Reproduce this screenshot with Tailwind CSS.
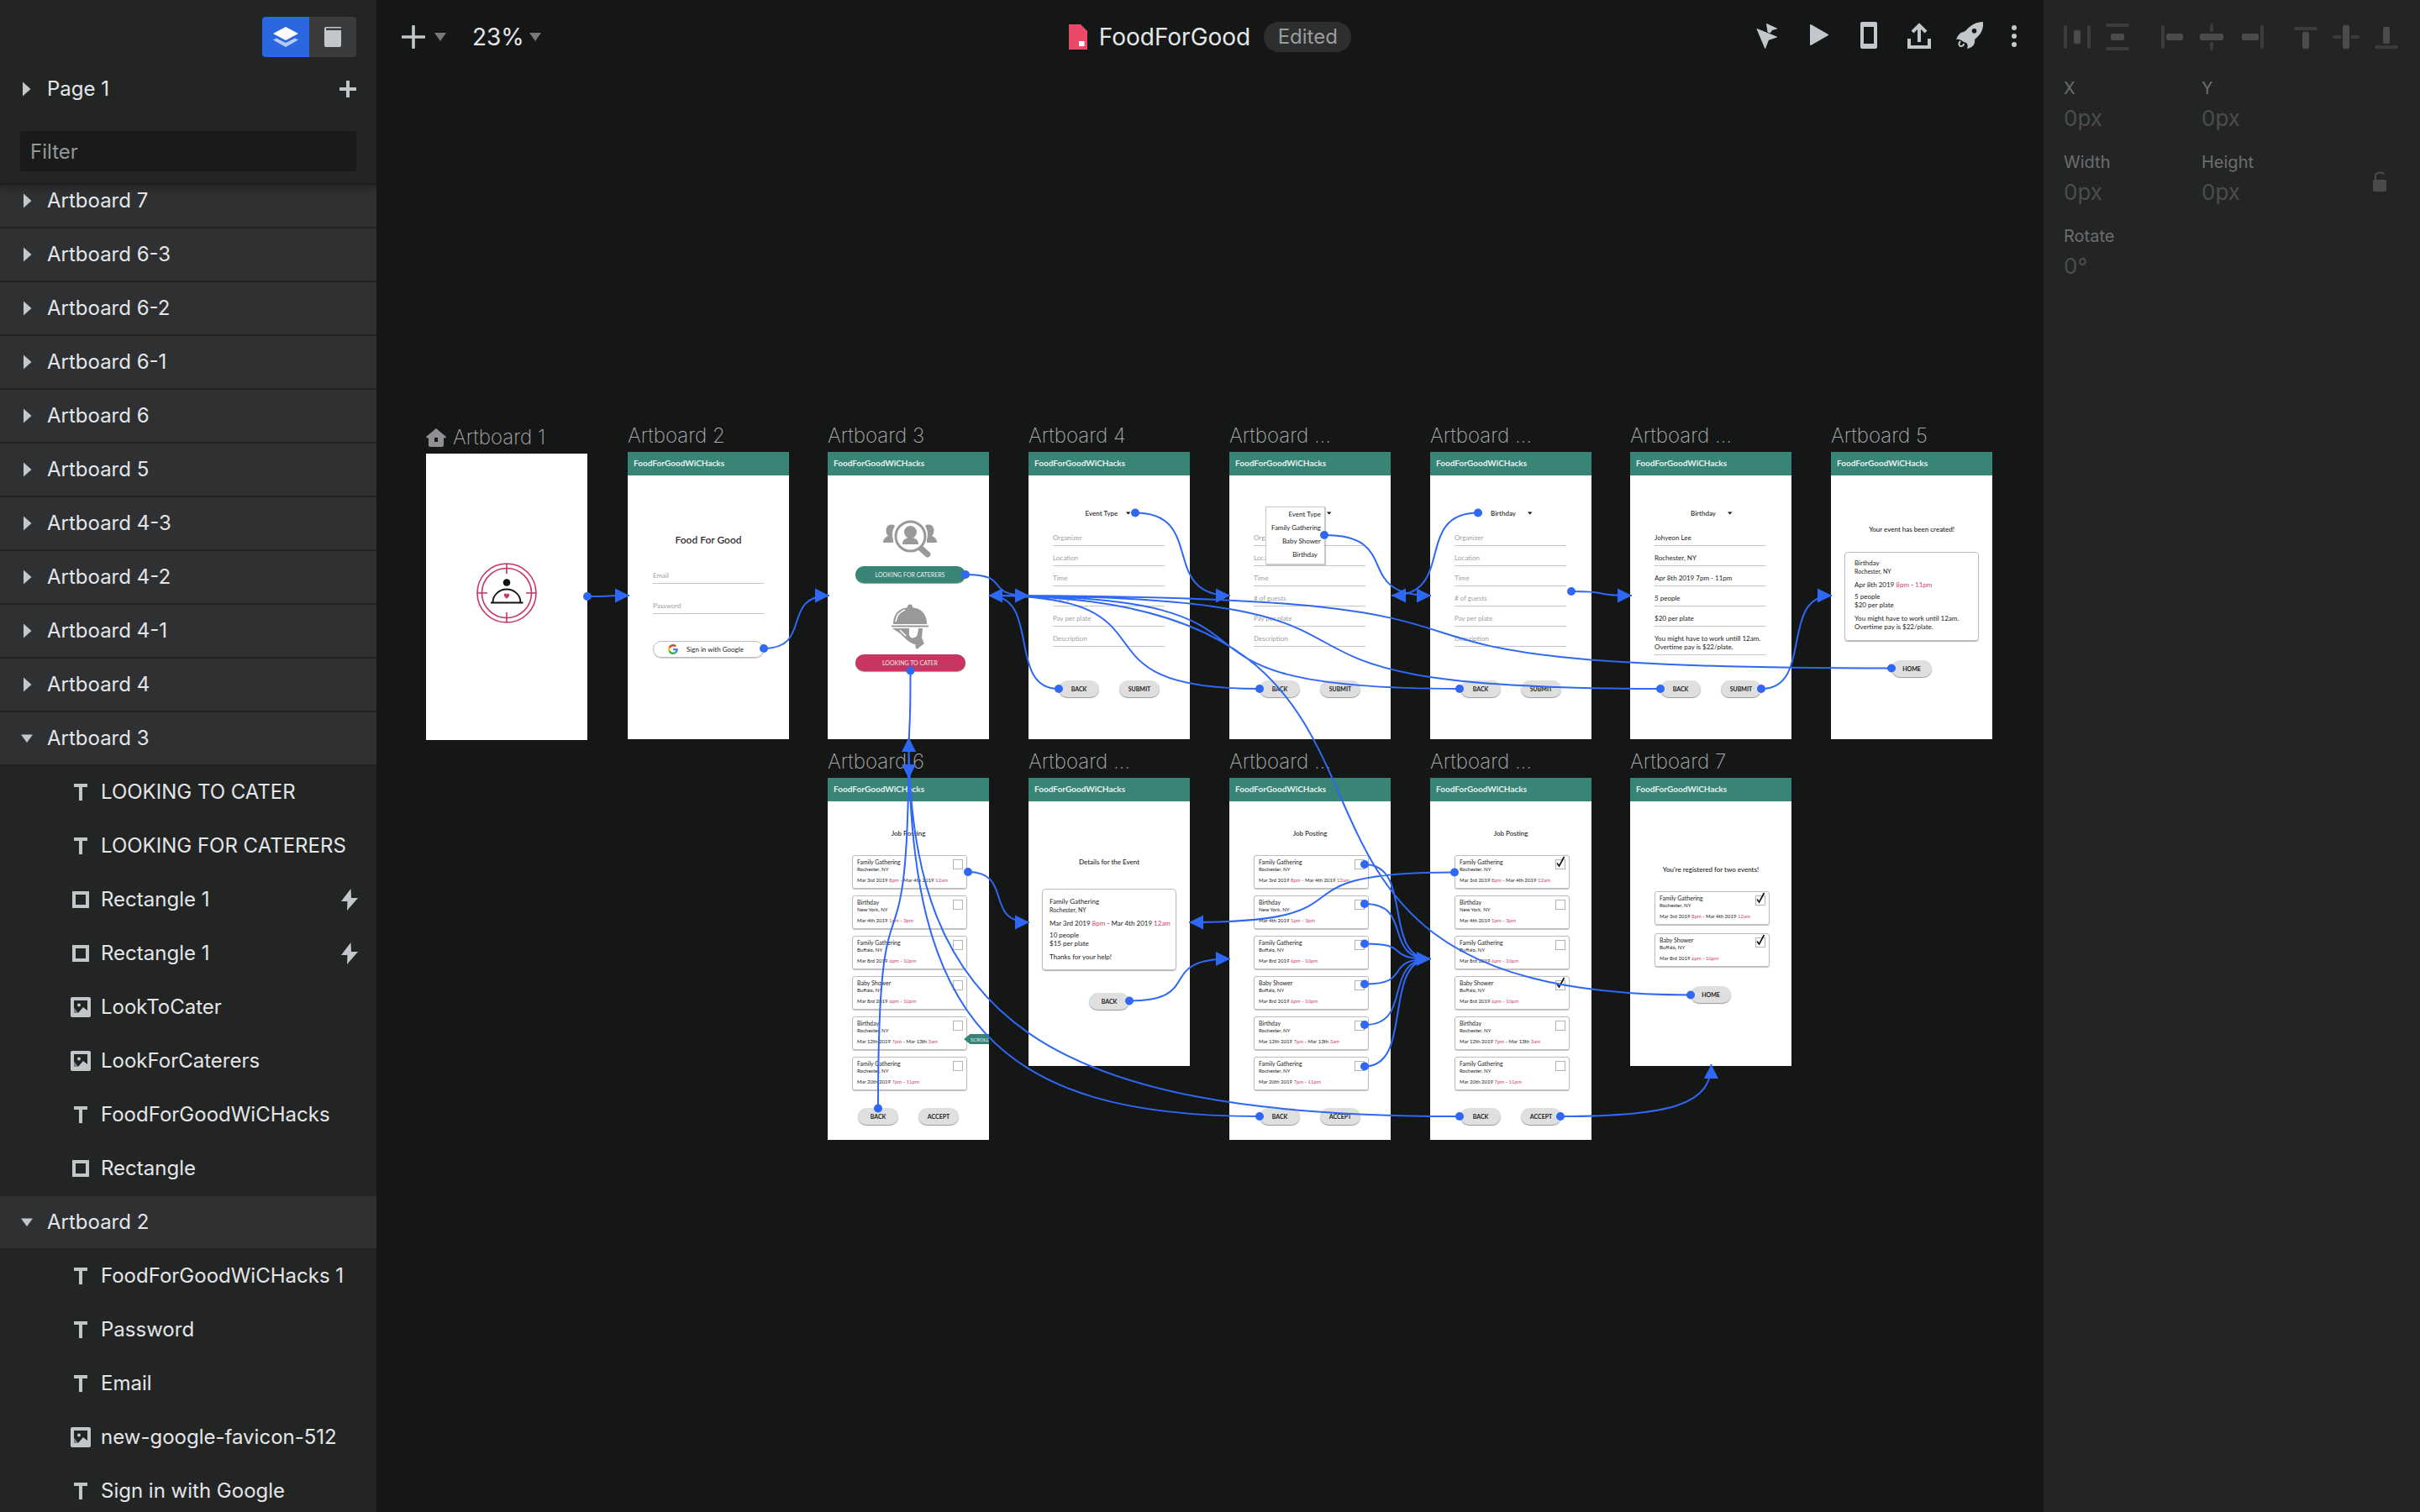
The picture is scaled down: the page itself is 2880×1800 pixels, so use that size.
<!DOCTYPE html>
<html lang="en">
<head>
<meta charset="utf-8">
<title>FoodForGood</title>
<script src="https://cdn.jsdelivr.net/npm/@tailwindcss/browser@4"></script>
</head>
<body class="flex h-screen overflow-hidden bg-[#151716] font-['Inter',sans-serif] text-[#e4e6e9]">

<svg class="hidden">
  <symbol id="i-right" viewBox="0 0 12 20"><path d="M1 1.5 10.500 10 1 18.500z" fill="#c3c6ca"/></symbol>
  <symbol id="i-down" viewBox="0 0 16 12"><path d="M1 1.500h14L8 11z" fill="#c3c6ca"/></symbol>
  <symbol id="i-text" viewBox="0 0 24 24"><path d="M4 2h16v4h-6v16h-4V6H4z" fill="#c3c6ca"/></symbol>
  <symbol id="i-rect" viewBox="0 0 24 24"><path d="M4 4h16v16H4z" fill="none" stroke="#c3c6ca" stroke-width="4"/></symbol>
  <symbol id="i-image" viewBox="0 0 24 24"><rect width="24" height="24" rx="2" fill="#c3c6ca"/><path d="M4 4h16v12l-5-4-6 7-5-6z" fill="#232524"/><path d="M4 13l5 6H4z" fill="#7c7f81"/><circle cx="10" cy="9.500" r="2" fill="#c3c6ca"/></symbol>
  <symbol id="i-bolt" viewBox="0 0 20 26"><path d="M11.500 0 0 15h7.500L7 26 20 11h-8z" fill="#c3c6ca"/></symbol>
  <symbol id="i-caret" viewBox="0 0 14 10"><path d="M0 0h14L7 10z" fill="#77797b"/></symbol>
  <symbol id="i-pick" viewBox="0 0 6 4"><path d="M0 .5h5.500L2.750 3.500z" fill="#111"/></symbol>
  <symbol id="i-google" viewBox="0 0 48 48">
    <path fill="#EA4335" d="M24 9.500c3.540 0 6.710 1.220 9.210 3.600l6.850-6.850C35.900 2.380 30.470 0 24 0 14.620 0 6.510 5.380 2.560 13.220l7.980 6.190C12.430 13.720 17.740 9.500 24 9.500z"/>
    <path fill="#4285F4" d="M46.980 24.550c0-1.570-.15-3.090-.38-4.550H24v9.020h12.940c-.58 2.960-2.260 5.480-4.780 7.180l7.730 6c4.510-4.180 7.090-10.360 7.090-17.650z"/>
    <path fill="#FBBC05" d="M10.530 28.590c-.48-1.450-.76-2.990-.76-4.590s.27-3.140.76-4.590l-7.980-6.190C.92 16.460 0 20.120 0 24c0 3.880.92 7.540 2.560 10.780l7.970-6.190z"/>
    <path fill="#34A853" d="M24 48c6.480 0 11.930-2.130 15.890-5.810l-7.730-6c-2.150 1.450-4.920 2.300-8.160 2.300-6.260 0-11.570-4.220-13.470-9.910l-7.980 6.190C6.510 42.620 14.620 48 24 48z"/>
  </symbol>
  <symbol id="i-logo" viewBox="0 0 72 72">
    <g fill="none" stroke="#c83560" stroke-width="1.600"><circle cx="36" cy="36" r="35"/><circle cx="36" cy="36" r="29.500"/><path d="M36 1v12M36 59v12M1 36h12M59 36h12"/></g>
    <circle cx="36" cy="23.500" r="4.300" fill="#111"/>
    <path d="M19.500 47a16.500 15.500 0 0 1 33 0M17 47.500h38.500" fill="none" stroke="#111" stroke-width="1.800"/>
    <path d="M36 43l-3-3.500c-.8-3 2-4 3-1.500 1-2.500 3.800-1.500 3 1.500z" fill="#c83560"/>
  </symbol>
  <symbol id="i-people" viewBox="0 0 66 46">
    <g fill="#999">
      <path d="M8 6c3-1 6-.5 7 1-3 5-4 11-2 16v4H1c0-4 2-6 6-8-4-4-3-11 1-13z"/>
      <path d="M58 6c-3-1-6-.5-7 1 3 5 4 11 2 16v4h12c0-4-2-6-6-8 4-4 3-11-1-13z"/>
      <circle cx="33.500" cy="14.500" r="7.500"/><path d="M24 29c0-5 3-7 7-8h5c4 1 7 3 7 8z"/>
      <path d="M42 35l5-5 10 9c2 3-2 7-5 5z"/>
    </g>
    <circle cx="33.500" cy="19.500" r="17.500" fill="none" stroke="#999" stroke-width="3"/>
  </symbol>
  <symbol id="i-cloche" viewBox="0 0 44 54">
    <g fill="#999">
      <circle cx="22" cy="3.500" r="3"/><path d="M2 24C2 10 11 4 22 4s20 6 20 20z"/>
      <path d="M0 25.500h44v2H0z"/><path d="M1 29h20v5c-1 7 6 9 9 3l2-8h5l-1 12 2 3-8 5C19 46 16 40 10 35z"/>
      <path d="M28 50l8-7 3 4-9 7z"/>
    </g>
    <path d="M5 21C6 13 10 9 16 7M10 31l7 7" stroke="#fff" stroke-width="1.500" fill="none"/>
    <path d="M23 28.500h9l-1 7c-1 6-8 6-8 0z" fill="#fff"/>
  </symbol>
  <symbol id="i-check" viewBox="0 0 12 14"><path d="M2 8.500 4.500 12 10.500 1" fill="none" stroke="#111" stroke-width="1.600"/></symbol>
</svg>

<!-- Layers -->
<aside class="flex w-[448px] shrink-0 flex-col overflow-hidden bg-[#232524]">
  <header class="relative z-10 border-b-2 border-[#1c1e1e] bg-[#232524] px-6 pt-5 pb-3.5 shadow-[0_4px_8px_rgba(0,0,0,0.25)]">
    <div class="flex justify-end">
      <div class="flex h-12 w-28 overflow-hidden rounded">
        <button aria-label="Layers" class="flex flex-1 items-center justify-center bg-[#2c67e2]">
          <svg class="h-6 w-[30px]" viewBox="0 0 30 24"><path d="M15 0l15 8-15 8L0 8z" fill="#fff"/><path d="M0 15.500l4-2L15 19l11-5.500 4 2L15 24z" fill="#fff" fill-opacity=".65"/></svg>
        </button>
        <button aria-label="Pages" class="flex flex-1 items-center justify-center bg-[#3a3b3d]">
          <svg class="h-6 w-5" viewBox="0 0 20 24"><path d="M2 0h18v1.500H2V4h18v18a2 2 0 0 1-2 2H2a2 2 0 0 1-2-2V2a2 2 0 0 1 2-2z" fill="#c3c6cb"/></svg>
        </button>
      </div>
    </div>
    <div class="mt-3.5 flex h-12 items-center">
      <button class="flex flex-1 items-center gap-[18px] pl-[2px] text-left text-2xl"><svg class="h-5 w-3"><use href="#i-right"/></svg>Page 1</button>
      <button aria-label="Add page"><svg class="h-5 w-5" viewBox="0 0 20 20"><path d="M10 1v18M1 10h18" stroke="#c3c6ca" stroke-width="4" stroke-linecap="round"/></svg></button>
    </div>
    <input aria-label="Filter" placeholder="Filter" class="mt-[26px] block h-12 w-full rounded bg-[#191b1a] px-3 text-2xl placeholder:text-[#95979a]">
  </header>
  <ul id="layers" class="-mt-3 shrink-0 text-2xl"></ul>
</aside>

<!-- Canvas -->
<main class="relative min-w-0 flex-1 overflow-hidden">
  <div class="relative z-10 grid h-[88px] grid-cols-[1fr_auto_1fr] items-center text-[28px]">
    <div class="flex items-center pl-[30px]">
      <button aria-label="Insert" class="flex items-center gap-[11px]">
        <svg class="h-7 w-7" viewBox="0 0 28 28"><path d="M14 1.500v25M1.500 14h25" stroke="#c3c6cb" stroke-width="3.600" stroke-linecap="round"/></svg>
        <svg class="h-2.5 w-3.5"><use href="#i-caret"/></svg>
      </button>
      <button class="ml-[31px] flex items-center gap-1.5">23%<svg class="h-2.5 w-3.5"><use href="#i-caret"/></svg></button>
    </div>
    <div class="flex items-center">
      <svg class="h-[30px] w-[22px]" viewBox="0 0 22 30"><path d="M0 0h14l8 8v22H0z" fill="#ec4868"/><path d="M12 20h6.500v6H12z" fill="#fff"/></svg>
      <h1 class="ml-3.5">FoodForGood</h1>
      <span class="ml-4 flex h-9 w-[104px] items-center justify-center rounded-full bg-[#2d2f2f] text-2xl text-[#9a9c9e]">Edited</span>
    </div>
    <div class="flex items-center justify-end gap-5 pr-[22px] pb-1">
      <button aria-label="Hotspots" class="flex w-10 justify-center"><svg class="h-8 w-8" viewBox="0 0 32 32" fill="#c3c6cb" stroke="#c3c6cb" stroke-linejoin="round"><path d="M3 8.500 26.500 18l-10 3.500-3.800 10z"/><path d="M14.500 2.500 26.500 8l-5.500 1.500L18.500 13l-2.500-1z"/></svg></button>
      <button aria-label="Play" class="flex w-10 justify-center"><svg class="h-8 w-8" viewBox="0 0 32 32" fill="#c3c6cb" stroke="#c3c6cb" stroke-width="2" stroke-linejoin="round"><path d="M7 4v23l20-11.500z"/></svg></button>
      <button aria-label="Device preview" class="flex w-10 justify-center"><svg class="h-8 w-8" viewBox="0 0 32 32"><path fill-rule="evenodd" d="M8 0h16a2 2 0 0 1 2 2v28a2 2 0 0 1-2 2H8a2 2 0 0 1-2-2V2a2 2 0 0 1 2-2zm2 6v20h12V6z" fill="#c3c6cb"/></svg></button>
      <button aria-label="Share" class="flex w-10 justify-center"><svg class="h-8 w-8" viewBox="0 0 32 32" fill="none" stroke="#c3c6cb" stroke-width="4"><path d="M4 20v10h24V20"/><path d="M16 24V5M8 12l8-8 8 8"/></svg></button>
      <button aria-label="Publish" class="flex w-10 justify-center"><svg class="h-8 w-8" viewBox="0 0 32 32"><path fill-rule="evenodd" d="M32 0C33 10 28 16 22 21c1 6-3 10-9 11 1-3 1-5-1-7l-3-1c-3-2-5-4-9-3 2-5 5-9 9-9l3-2C17 4 24 0 32 0zM21.500 8a2.800 2.800 0 1 0 0 5.600 2.800 2.800 0 0 0 0-5.600z" fill="#c3c6cb"/><path d="M5 23c-3 3-1 6 0 6s4 0 4-3" fill="none" stroke="#c3c6cb" stroke-width="2"/></svg></button>
      <button aria-label="More" class="flex w-[26px] justify-center"><svg class="h-8 w-2" viewBox="0 0 8 32" fill="#c3c6cb"><circle cx="4" cy="7" r="3"/><circle cx="4" cy="17" r="3"/><circle cx="4" cy="27" r="3"/></svg></button>
    </div>
  </div>
  <div id="boards" class="absolute inset-0 font-['Lato',sans-serif] text-[#222]"></div>
  <svg id="links" class="pointer-events-none absolute inset-0 h-full w-full" fill="#2e68f4" stroke-width="2"></svg>
</main>

<!-- Inspector -->
<aside class="w-[448px] shrink-0 bg-[#232524] px-6 pt-7">
  <div class="flex gap-8">
    <div class="flex gap-4">
      <button aria-label="Distribute horizontally" disabled><svg class="h-8 w-8" viewBox="0 0 32 32"><rect y="2" width="4" height="28" rx="2" fill="#3a3c3c"/><rect x="28" y="2" width="4" height="28" rx="2" fill="#3a3c3c"/><rect x="12" y="8" width="8" height="16" rx="2" fill="#4a4b4d"/></svg></button>
      <button aria-label="Distribute vertically" disabled><svg class="h-8 w-8" viewBox="0 0 32 32"><rect x="2" width="28" height="4" rx="2" fill="#3a3c3c"/><rect x="2" y="28" width="28" height="4" rx="2" fill="#3a3c3c"/><rect x="8" y="12" width="16" height="8" rx="2" fill="#4a4b4d"/></svg></button>
    </div>
    <div class="flex gap-4">
      <button aria-label="Align left" disabled><svg class="h-8 w-8" viewBox="0 0 32 32"><rect x="4" y="2" width="4" height="28" rx="2" fill="#3a3c3c"/><rect x="10" y="12" width="20" height="8" rx="2" fill="#4a4b4d"/></svg></button>
      <button aria-label="Align centre" disabled><svg class="h-8 w-8" viewBox="0 0 32 32"><path d="M14 2a2 2 0 0 1 4 0v8h-4zM14 22h4v8a2 2 0 0 1-4 0z" fill="#3a3c3c"/><rect x="2" y="12" width="28" height="8" rx="2" fill="#4a4b4d"/></svg></button>
      <button aria-label="Align right" disabled><svg class="h-8 w-8" viewBox="0 0 32 32"><rect x="26" y="2" width="4" height="28" rx="2" fill="#3a3c3c"/><rect x="4" y="12" width="20" height="8" rx="2" fill="#4a4b4d"/></svg></button>
    </div>
    <div class="flex gap-4">
      <button aria-label="Align top" disabled><svg class="h-8 w-8" viewBox="0 0 32 32"><rect x="2" y="4" width="28" height="4" rx="2" fill="#3a3c3c"/><rect x="12" y="10" width="8" height="20" rx="2" fill="#4a4b4d"/></svg></button>
      <button aria-label="Align middle" disabled><svg class="h-8 w-8" viewBox="0 0 32 32"><path d="M2 14a2 2 0 0 0 0 4h8v-4zM22 14v4h8a2 2 0 0 0 0-4z" fill="#3a3c3c"/><rect x="12" y="2" width="8" height="28" rx="2" fill="#4a4b4d"/></svg></button>
      <button aria-label="Align bottom" disabled><svg class="h-8 w-8" viewBox="0 0 32 32"><rect x="2" y="26" width="28" height="4" rx="2" fill="#3a3c3c"/><rect x="12" y="4" width="8" height="20" rx="2" fill="#4a4b4d"/></svg></button>
    </div>
  </div>
  <div class="mt-[33px] flex">
    <div class="grid grid-cols-[164px_164px] gap-y-[22px] text-[26px] text-[#4b4d4e]">
      <div class="h-[66px]"><label for="x" class="block h-6 text-xl leading-6 text-[#6c6e70]">X</label><input id="x" value="0px" disabled class="mt-[5px] block h-9 w-36"></div>
      <div class="h-[66px]"><label for="y" class="block h-6 text-xl leading-6 text-[#6c6e70]">Y</label><input id="y" value="0px" disabled class="mt-[5px] block h-9 w-36"></div>
      <div class="h-[66px]"><label for="w" class="block h-6 text-xl leading-6 text-[#6c6e70]">Width</label><input id="w" value="0px" disabled class="mt-[5px] block h-9 w-36"></div>
      <div class="h-[66px]"><label for="h" class="block h-6 text-xl leading-6 text-[#6c6e70]">Height</label><input id="h" value="0px" disabled class="mt-[5px] block h-9 w-36"></div>
      <div class="h-[66px]"><label for="r" class="block h-6 text-xl leading-6 text-[#6c6e70]">Rotate</label><input id="r" value="0°" disabled class="mt-[5px] block h-9 w-36"></div>
    </div>
    <button aria-label="Lock ratio" disabled class="mt-[111px] ml-10 h-6 w-4"><svg class="h-6 w-4" viewBox="0 0 16 24"><rect y="10" width="16" height="14" rx="2" fill="#4a4b4d"/><path d="M3 11V6c0-5 8-6 10-2.500" fill="none" stroke="#4a4b4d" stroke-width="2"/></svg></button>
  </div>
</aside>

<script>
  // Layer list
  const closed = ['7', '6-3', '6-2', '6-1', '6', '5', '4-3', '4-2', '4-1', '4'];
  const boardRow = (name, icon, size) =>
    `<li class="h-16 border-b-2 border-[#232524] bg-[#2f3032]"><button class="flex h-full w-full items-center pb-px pl-6 text-left"><span class="flex w-8 justify-start"><svg class="${size}"><use href="#${icon}"/></svg></span>Artboard ${name}</button></li>`;
  const layerRow = ([icon, name, bolt]) =>
    `<li class="h-16"><button class="flex h-[62px] w-full items-center gap-3 pr-[22px] pb-px pl-[84px] text-left"><svg class="h-6 w-6"><use href="#i-${icon}"/></svg><span class="flex-1">${name}</span>${bolt ? '<svg class="h-[26px] w-5"><use href="#i-bolt"/></svg>' : ''}</button></li>`;
  const open3 = [['text', 'LOOKING TO CATER'], ['text', 'LOOKING FOR CATERERS'], ['rect', 'Rectangle 1', 1], ['rect', 'Rectangle 1', 1], ['image', 'LookToCater'], ['image', 'LookForCaterers'], ['text', 'FoodForGoodWiCHacks'], ['rect', 'Rectangle']];
  const open2 = [['text', 'FoodForGoodWiCHacks 1'], ['text', 'Password'], ['text', 'Email'], ['image', 'new-google-favicon-512'], ['text', 'Sign in with Google']];
  document.getElementById('layers').innerHTML =
    closed.map(n => boardRow(n, 'i-right', 'ml-[3px] h-5 w-3')).join('') +
    boardRow('3', 'i-down', 'h-3 w-4') + open3.map(layerRow).join('') +
    boardRow('2', 'i-down', 'h-3 w-4') + open2.map(layerRow).join('');

  // Artboards
  const pill = t => `<button class="h-5 w-12 rounded-full bg-[#dfdfdf] text-[7px] font-bold shadow-[0_1px_1px_rgba(0,0,0,0.4)]">${t}</button>`;
  const pair = (a, b) => `<div class="mt-auto mb-[50px] flex justify-center gap-6">${pill(a)}${pill(b)}</div>`;
  const red = t => `<span class="text-[#d0416f]">${t}</span>`;
  const titled = (name, x, y, h, body, home) => `
    <section class="absolute w-48" style="left:${x}px;top:${y}px">
      <h2 class="flex h-[38px] items-center gap-2 pb-px font-['Inter',sans-serif] text-2xl font-extralight whitespace-nowrap text-[#aaacaf]">${home ? '<svg class="h-[22px] w-6" viewBox="0 0 24 22"><path fill-rule="evenodd" d="M12 0l12 10-1 1.500h-2V20a2 2 0 0 1-2 2H5a2 2 0 0 1-2-2v-8.500H1L0 10zM10 11v5h4v-5z" fill="#8e9093"/></svg>' : ''}${name}</h2>
      <div class="relative flex flex-col overflow-hidden bg-white" style="height:${h}px">${body}</div>
    </section>`;
  const bar = '<div class="flex h-7 shrink-0 items-center bg-[#388477] pb-0.5 pl-[7px] text-[10px] font-bold text-[#e6f2ef]">FoodForGoodWiCHacks</div>';
  const picker = t => `<div class="mt-[37px] flex h-4 items-center pl-[58px]"><select aria-label="Event type" class="w-[58px] appearance-none text-center text-[8px] font-medium"><option>${t}</option></select><svg class="h-1 w-1.5"><use href="#i-pick"/></svg></div>`;
  const field = (label, value) =>
    `<input aria-label="${label}" placeholder="${label}" value="${value || ''}" class="block h-[18px] w-full border-b border-[#c6c6c6] pb-0.5 text-[8px] placeholder:text-[#a0a0a0]">`;
  const labels = ['Organizer', 'Location', 'Time', '# of guests', 'Pay per plate', 'Description'];
  const blank = `<div class="mt-[13px] grid gap-1.5 pr-[30px] pl-[29px]">${labels.map(l => field(l)).join('')}</div>`;
  const filledValues = ['Johyeon Lee', 'Rochester, NY', 'Apr 8th 2019 7pm - 11pm', '5 people', '$20 per plate'];
  const filled = `<div class="mt-[13px] grid gap-1.5 pr-[30px] pl-[29px]">${filledValues.map((v, i) => field(labels[i], v)).join('')}<textarea aria-label="Description" class="block h-7 w-full resize-none overflow-hidden border-b border-[#c6c6c6] pt-[3px] text-[8px] leading-[10px] whitespace-pre">You might have to work untill 12am.
Overtime pay is $22/plate.</textarea></div>`;
  const job = (title, place, date, on) => `
    <div class="flex h-10 shrink-0 justify-between rounded-[3px] border border-[#bdbdbd] pt-0.5 pr-1 pl-[5px] shadow-[0_1px_1px_rgba(0,0,0,0.25)]">
      <div><p class="text-[7px] leading-[10px]">${title}</p><p class="text-[6px] leading-[8px]">${place}</p><p class="mt-1 text-[6px] leading-[10px] whitespace-nowrap">${date}</p></div>
      <label class="relative -ml-3 mt-0.5 block h-3 w-3"><input type="checkbox" aria-label="${title}" ${on ? 'checked' : ''} class="block h-3 w-3 appearance-none border border-[#b5b5b5] bg-white">${on ? '<svg class="absolute -top-1 left-0 h-3.5 w-3"><use href="#i-check"/></svg>' : ''}</label>
    </div>`;
  const dateA = `Mar 3rd 2019 ${red('8pm')} - Mar 4th 2019 ${red('12am')}`;
  const dateB = `Mar 8rd 2019 ${red('6pm')} - ${red('10pm')}`;
  const jobs = on => `
    <h3 class="mt-[30px] text-center text-[8px] leading-4 font-medium">Job Posting</h3>
    <div class="mt-[18px] grid gap-2 pr-[26px] pl-[29px]">
      ${job('Family Gathering', 'Rochester, NY', dateA, on)}
      ${job('Birthday', 'New York, NY', `Mar 4th 2019 ${red('1pm')} - ${red('3pm')}`)}
      ${job('Family Gathering', 'Buffalo, NY', dateB)}
      ${job('Baby Shower', 'Buffalo, NY', dateB, on)}
      ${job('Birthday', 'Rochester, NY', `Mar 12th 2019 ${red('7pm')} - Mar 13th ${red('3am')}`)}
      ${job('Family Gathering', 'Rochester, NY', `Mar 20th 2019 ${red('7pm')} - ${red('11pm')}`)}
    </div>
    <div class="mt-[21px] flex justify-center gap-6">${pill('BACK')}${pill('ACCEPT')}</div>`;
  const cta = (t, tone) => `<button class="h-5 w-[131px] shrink-0 rounded-full ${tone} text-[7px] text-[#f3e8ec] shadow-[0_1px_1px_rgba(0,0,0,0.4)]">${t}</button>`;

  document.getElementById('boards').innerHTML = [
    titled('Artboard 1', 59, 502, 341, '<svg class="mx-auto mt-[130px] h-[72px] w-[72px]"><use href="#i-logo"/></svg>', true),
    titled('Artboard 2', 299, 500, 342, `${bar}
      <h3 class="mt-[67px] text-center text-xs leading-5 font-medium">Food For Good</h3>
      <div class="mt-6 grid gap-[18px] px-[30px]">${field('Email')}${field('Password')}</div>
      <button class="mx-auto mt-8 flex h-5 w-[132px] items-center gap-2.5 rounded-full border border-[#bdbdbd] pl-[17px] text-[8px] shadow-[0_1px_1px_rgba(0,0,0,0.2)]"><svg class="h-3 w-3"><use href="#i-google"/></svg>Sign in with Google</button>`),
    titled('Artboard 3', 537, 500, 342, `${bar}
      <div class="flex flex-col items-center pt-[53px] pl-1">
        <svg class="h-[46px] w-[66px]"><use href="#i-people"/></svg><div class="h-[9px]"></div>
        ${cta('LOOKING FOR CATERERS', 'bg-[#388477]')}
        <svg class="mt-[25px] mb-1.5 h-[54px] w-11"><use href="#i-cloche"/></svg>
        ${cta('LOOKING TO CATER', 'bg-[#c83560]')}
      </div>`),
    titled('Artboard 4', 776, 500, 342, bar + picker('Event Type') + blank + pair('BACK', 'SUBMIT')),
    titled('Artboard …', 1015, 500, 342, bar + picker('Event Type') + blank + pair('BACK', 'SUBMIT') +
      `<div class="absolute top-[65px] left-[43px] flex h-[69px] w-[71px] flex-col items-end border border-[#c8c8c8] bg-white pr-1 text-[8px] leading-4 whitespace-nowrap shadow-[1px_1px_1px_rgba(0,0,0,0.2)]"><span>Event Type</span><span>Family Gathering</span><span>Baby Shower</span><span class="pr-1">Birthday</span></div>`),
    titled('Artboard …', 1254, 500, 342, bar + picker('Birthday') + blank + pair('BACK', 'SUBMIT')),
    titled('Artboard …', 1492, 500, 342, bar + picker('Birthday') + filled + pair('BACK', 'SUBMIT')),
    titled('Artboard 5', 1731, 500, 342, `${bar}
      <h3 class="mt-14 text-center text-[8px] leading-4 font-medium">Your event has been created!</h3>
      <div class="mx-4 mt-[19px] h-[106px] rounded border border-[#bdbdbd] pt-[7px] pl-[11px] text-[8px] leading-[10px] whitespace-nowrap shadow-[0_1px_1px_rgba(0,0,0,0.3)]">
        <p>Birthday</p><p class="text-[7px]">Rochester, NY</p><p class="mt-1.5">Apr 8th 2019 ${red('8pm')} - ${red('11pm')}</p>
        <p class="mt-1">5 people</p><p>$20 per plate</p><p class="mt-1.5">You might have to work until 12am.<br>Overtime pay is $22/plate.</p>
      </div>
      <div class="mt-[23px] flex justify-center">${pill('HOME')}</div>`),
    titled('Artboard 6', 537, 888, 431, bar + jobs(false) +
      '<div class="absolute top-[305px] right-0 flex h-3 w-[30px] items-center bg-[#388477] pl-2 text-[6px] text-[#e0efec] [clip-path:polygon(0_50%,25%_0,100%_0,100%_100%,25%_100%)]">SCROLL</div>'),
    titled('Artboard …', 776, 888, 343, `${bar}
      <h3 class="mt-16 text-center text-[8px] leading-4 font-medium">Details for the Event</h3>
      <div class="mx-4 mt-6 h-[97px] rounded border border-[#bdbdbd] pt-[9px] pl-2 text-[8px] leading-[10px] whitespace-nowrap shadow-[0_1px_1px_rgba(0,0,0,0.3)]">
        <p>Family Gathering</p><p class="text-[7px]">Rochester, NY</p><p class="mt-1.5">${dateA}</p>
        <p class="mt-1">10 people</p><p>$15 per plate</p><p class="mt-1.5">Thanks for your help!</p>
      </div>
      <div class="mt-[27px] flex justify-center">${pill('BACK')}</div>`),
    titled('Artboard …', 1015, 888, 431, bar + jobs(false)),
    titled('Artboard …', 1254, 888, 431, bar + jobs(true)),
    titled('Artboard 7', 1492, 888, 343, `${bar}
      <h3 class="mt-[73px] text-center text-[8px] leading-4 font-medium">You're registered for two events!</h3>
      <div class="mt-[18px] grid gap-2.5 pr-[26px] pl-[29px]">${job('Family Gathering', 'Rochester, NY', dateA, true)}${job('Baby Shower', 'Buffalo, NY', dateB, true)}</div>
      <div class="mt-[23px] flex justify-center">${pill('HOME')}</div>`)
  ].join('');

  // Links between screens: [x1, y1, x2, y2, kind]
  const back = [729, 709], job1 = [633.5, 878];
  const links = [
    [251, 710, 301, 709], [461, 772, 539, 709], [701, 684, 777, 709], [812, 820, ...back],
    [903, 610.5, 1016, 709], [1051, 820, ...back], [1289, 820, ...back], [1528, 820, ...back],
    [1803, 795.5, ...back], [1564, 1184.5, ...back], [1128, 637, 1255, 709], [1311, 610.5, 1208, 709],
    [1422, 704, 1494, 709], [1648, 820, 1732, 709], [635.5, 798.500, 633.5, 927, 'v'], [597, 1319.5, ...job1, 'v'],
    [1051, 1329, ...job1, 'q'], [1289, 1329, ...job1, 'q'], [1409, 1329, 1588.5, 1267, 'q'],
    [896, 1191.5, 1016, 1141.5], [704, 1038, 777, 1098], [1283, 1038.5, 967, 1098],
    ...[1029, 1076, 1123.5, 1171.5, 1220, 1269.5].map(y => [1176, y, 1255, 1141.5])
  ];
  const curve = ([a, b, c, d, k]) => {
    const r = .75, dx = (c - a) * r, dy = (d - b) * r;
    if (k === 'v') return `M${a} ${b}C${a} ${b + dy} ${c} ${d - dy} ${c} ${d}`;
    if (k === 'q') return `M${a} ${b}C${a + dx} ${b} ${c} ${d - dy} ${c} ${d}`;
    return `M${a} ${b}C${a + dx} ${b} ${c - dx} ${d} ${c} ${d}`;
  };
  const arrows = [[301, 709, 0], [539, 709, 0], [777, 709, 0], [1016, 709, 0], [1255, 709, 0], [1494, 709, 0], [1732, 709, 0],
    [728, 709, 180], [1208, 709, 180], [777, 1098, 0], [967, 1098, 180], [1016, 1141.5, 0], [1255, 1141.5, 0],
    [633.5, 878, 270], [633.5, 927, 90], [1588.5, 1267, 270]];
  document.getElementById('links').innerHTML =
    `<path fill="none" stroke="#2e68f4" d="${links.map(curve).join('')}"/>` +
    links.map(l => `<circle cx="${l[0]}" cy="${l[1]}" r="5"/>`).join('') +
    arrows.map(([x, y, r]) => `<path d="M0 0-17-8.500V8.500z" transform="translate(${x} ${y}) rotate(${r})"/>`).join('');
</script>
</body>
</html>
